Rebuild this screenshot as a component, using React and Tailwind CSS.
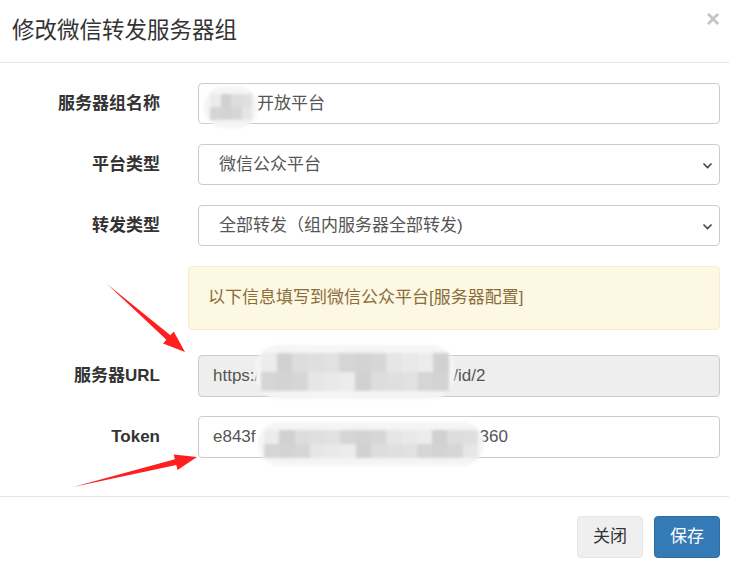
import React from "react";

/* ======================
   HELPERS
====================== */
const FONT = {
  fontFamily: '"Liberation Sans", "Noto Sans CJK SC", sans-serif',
};

// mosaic cells for the blurred-out parts
const MOSAIC = [
  "bg-[#ececec]",
  "bg-[#d6d6d6]",
  "bg-[#e1e1e1]",
  "bg-[#d1d1d1]",
  "bg-[#e6e6e6]",
  "bg-[#d5d5d5]",
  "bg-[#dddddd]",
  "bg-[#e9e9e9]",
  "bg-[#d3d3d3]",
  "bg-[#dfdfdf]",
];

function Mosaic({ className, cells }) {
  return (
    <div
      className={`absolute overflow-hidden rounded-[24px] bg-[#f5f5f5] px-[6px] py-[8px] ${className}`}
    >
      <div className="flex h-full flex-col">
        {[0, 1].map(r => (
          <div key={r} className="flex flex-1">
            {Array.from({ length: cells }).map((_, i) => (
              <div
                key={i}
                className={`flex-1 ${MOSAIC[(i * 3 + r * 5) % MOSAIC.length]}`}
              />
            ))}
          </div>
        ))}
      </div>
    </div>
  );
}

function Chevron() {
  return (
    <svg
      width="11"
      height="8"
      viewBox="0 0 11 8"
      className="absolute right-[6px] top-[17px]"
    >
      <path
        d="M1.5 1.5 L5.5 5.5 L9.5 1.5"
        fill="none"
        stroke="#444"
        strokeWidth="1.6"
      />
    </svg>
  );
}

function Row({ label, children }) {
  return (
    <div className="flex items-center">
      <div className="w-[160px] shrink-0 text-right text-[17px] font-bold text-[#333]">
        {label}
      </div>
      <div className="ml-[38px] mr-[9px] flex-1">{children}</div>
    </div>
  );
}

/* ======================
   COMPONENT
====================== */
export default function App() {
  return (
    <div className="relative h-[565px] w-[729px] overflow-hidden bg-white" style={FONT}>
      {/* header */}
      <div className="flex h-[63px] items-center justify-between border-b border-[#e5e5e5] pl-[12px] pr-[9px]">
        <h4 className="text-[22.5px] leading-none text-[#333]">修改微信转发服务器组</h4>
        <span className="mb-[24px] text-[24px] font-bold leading-none text-[#c4c4c4]">×</span>
      </div>

      {/* body */}
      <div className="flex flex-col pt-[20px]">
        <Row label="服务器组名称">
          <div className="flex h-[41px] items-center rounded-[4px] border border-[#ccc] pl-[58px] text-[17px] text-[#555]">
            开放平台
          </div>
        </Row>

        <div className="mt-[20px]">
          <Row label="平台类型">
            <div className="relative flex h-[41px] items-center rounded-[4px] border border-[#ccc] pl-[20px] text-[17px] text-[#555]">
              微信公众平台
              <Chevron />
            </div>
          </Row>
        </div>

        <div className="mt-[20px]">
          <Row label="转发类型">
            <div className="relative flex h-[41px] items-center rounded-[4px] border border-[#ccc] pl-[20px] text-[17px] text-[#555]">
              全部转发（组内服务器全部转发)
              <Chevron />
            </div>
          </Row>
        </div>

        <div className="ml-[188px] mr-[9px] mt-[20px] flex h-[64px] items-center rounded-[4px] border border-[#faebcc] bg-[#fcf8e3] pl-[19px] text-[17px] text-[#8a6d3b]">
          以下信息填写到微信公众平台[服务器配置]
        </div>

        <div className="mt-[25px]">
          <Row label="服务器URL">
            <div className="flex h-[42px] items-center rounded-[4px] border border-[#ccc] bg-[#eee] pl-[14px] text-[17px] text-[#555]">
              https:/
              <span className="ml-[194px]">/id/2</span>
            </div>
          </Row>
        </div>

        <div className="mt-[19px]">
          <Row label="Token">
            <div className="flex h-[42px] items-center rounded-[4px] border border-[#ccc] pl-[14px] text-[17px] text-[#555]">
              e843f
              <span className="ml-[224px]">360</span>
            </div>
          </Row>
        </div>
      </div>

      {/* footer */}
      <div className="mt-[38px] flex justify-end gap-[11px] border-t border-[#e5e5e5] pr-[9px] pt-[19px]">
        <button className="h-[42px] w-[66px] rounded-[4px] border border-[#e6e6e6] bg-[#efefef] text-[17px] text-[#333]">
          关闭
        </button>
        <button className="h-[42px] w-[66px] rounded-[4px] border border-[#2e6da4] bg-[#337ab7] text-[17px] text-white">
          保存
        </button>
      </div>

      {/* blurred-out bits */}
      <Mosaic className="left-[204px] top-[86px] h-[42px] w-[54px] blur-[1.5px]" cells={4} />
      <Mosaic className="left-[255px] top-[345px] h-[54px] w-[200px] blur-[1.5px]" cells={12} />
      <Mosaic className="left-[258px] top-[422px] h-[44px] w-[226px] blur-[1.5px]" cells={14} />

      {/* red annotation arrows */}
      <svg className="pointer-events-none absolute left-0 top-0" width="729" height="565">
        <polygon
          points="107,284 170.4,335.2 173.7,331.5 185,352 163.1,343.5 166.4,339.8"
          fill="#ff1f1f"
        />
        <polygon
          points="73,487 174.9,459.3 173.7,454.4 197,457 177.5,470 176.3,465.1"
          fill="#ff1f1f"
        />
      </svg>
    </div>
  );
}
